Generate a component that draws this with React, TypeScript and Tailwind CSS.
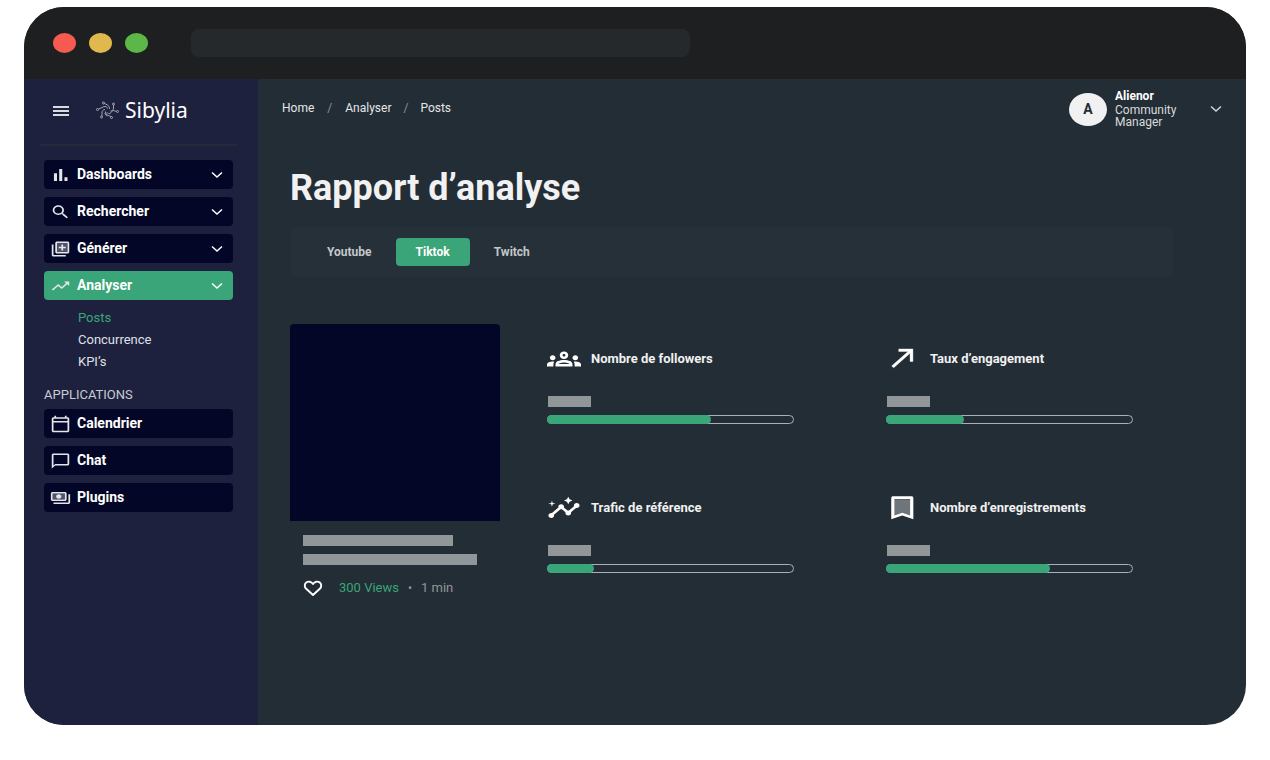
import { useState } from "react";
import type { ReactNode } from "react";

const focusRing = "focus-visible:outline-none focus-visible:ring-2 focus-visible:ring-white/60"; // visible keyboard focus

type IconProps = { className?: string; children: ReactNode };

const Icon = ({ className = "h-[18px] w-[21px]", children }: IconProps) => ( // 24 unit grid, wider than tall
  <svg viewBox="0 0 24 24" preserveAspectRatio="none" fill="currentColor" aria-hidden="true" className={`shrink-0 ${className}`}>
    {children}
  </svg>
);

const Chevron = ({ className = "" }: { className?: string }) => (
  <svg viewBox="0 0 12 8" fill="none" stroke="currentColor" strokeWidth="1.5" aria-hidden="true" className={`h-2 w-3 shrink-0 ${className}`}>
    <path d="M1 1.5l5 4.500 5-4.500" />
  </svg>
);

const Logo = () => ( // six circuit arms turning around the centre
  <svg viewBox="0 0 46 36" fill="none" stroke="#a9adbd" strokeWidth="1.9" aria-hidden="true" className="h-[18px] w-[23px] shrink-0">
    <path d="M17 5l6 3c3 2 4 4 4 8" />
    <path d="M35 8v6c0 4-2 6-6 6" />
    <path d="M41 21l-6-2c-3 0-4 4-7 6-2 1-5 0-6-2" />
    <path d="M30 31l-5-2c-4-1-6-3-6-8" />
    <path d="M12 30v-6c0-4 1-6 6-7" />
    <path d="M5 16l5-2c3-1 5-3 8-3 3 0 4 1 5 4" />
    <path d="M18 24c0 3 2 5 5 6" />
    <circle cx="15" cy="4" r="2" />
    <circle cx="35" cy="6" r="2" />
    <circle cx="43" cy="21" r="2" />
    <circle cx="31" cy="33" r="2" />
    <circle cx="11" cy="32" r="2" />
    <circle cx="3" cy="17" r="2" />
  </svg>
);

const menuItems = [
  { label: "Dashboards", icon: <path d="M4.500 9.500H8V20H4.500zm12 5.500H20v5h-3.500zM10.500 4H14v16h-3.500z" /> },
  {
    label: "Rechercher",
    icon: <path d="M15.5 14h-.79l-.28-.27A6.471 6.471 0 0 0 16 9.5 6.5 6.5 0 1 0 9.5 16c1.61 0 3.09-.59 4.23-1.57l.27.28v.79l5 4.99L20.49 19l-4.99-5zm-6 0C7.01 14 5 11.99 5 9.5S7.01 5 9.5 5 14 7.01 14 9.5 11.99 14 9.5 14z" />,
  },
  {
    label: "Générer",
    icon: (
      <>
        <path opacity=".35" d="M8 4h12v12H8z" />
        <path d="M4 6H2v14c0 1.1.9 2 2 2h14v-2H4V6zm16-4H8c-1.1 0-2 .9-2 2v12c0 1.1.9 2 2 2h12c1.1 0 2-.9 2-2V4c0-1.1-.9-2-2-2zm0 14H8V4h12v12zm-7-2h2v-3h3V9h-3V6h-2v3h-3v2h3z" />
      </>
    ),
  },
  { label: "Analyser", icon: <path d="M16 6l2.29 2.29-4.88 4.88-4-4L2 16.59 3.41 18l6-6 4 4 6.3-6.29L22 12V6h-6z" /> },
];

const subItems = ["Posts", "Concurrence", "KPI’s"];

const appItems = [
  {
    label: "Calendrier",
    icon: <path d="M20 3h-1V1h-2v2H7V1H5v2H4c-1.1 0-2 .9-2 2v16c0 1.1.9 2 2 2h16c1.1 0 2-.9 2-2V5c0-1.1-.9-2-2-2zm0 18H4V10h16v11zm0-13H4V5h16v3z" />,
  },
  { label: "Chat", icon: <path d="M20 2H4c-1.1 0-2 .9-2 2v18l4-4h14c1.1 0 2-.9 2-2V4c0-1.1-.9-2-2-2zm0 14H6l-2 2V4h16v12z" /> },
  {
    label: "Plugins",
    icon: (
      <>
        <path opacity=".35" d="M3 6h14v8H3z" />
        <path d="M19 14V6c0-1.1-.9-2-2-2H3c-1.1 0-2 .9-2 2v8c0 1.1.9 2 2 2h14c1.1 0 2-.9 2-2zm-2 0H3V6h14v8zm-7-7c-1.66 0-3 1.34-3 3s1.34 3 3 3 3-1.34 3-3-1.34-3-3-3zm13 0v11c0 1.1-.9 2-2 2H4v-2h17V7h2z" />
      </>
    ),
  },
];

const metrics = [
  {
    label: "Nombre de followers",
    value: 67,
    icon: <path d="M4 13c1.1 0 2-.9 2-2s-.9-2-2-2-2 .9-2 2 .9 2 2 2zm1.13 1.1c-.37-.06-.74-.1-1.13-.1-.99 0-1.93.21-2.78.58C.48 14.9 0 15.62 0 16.43V18h4.5v-1.61c0-.83.23-1.61.63-2.29zM20 13c1.1 0 2-.9 2-2s-.9-2-2-2-2 .9-2 2 .9 2 2 2zm4 3.43c0-.81-.48-1.53-1.22-1.85-.85-.37-1.79-.58-2.78-.58-.39 0-.76.04-1.13.1.4.68.63 1.46.63 2.29V18H24v-1.57zm-7.76-2.78c-1.17-.52-2.61-.9-4.24-.9-1.63 0-3.07.39-4.24.9C6.68 14.13 6 15.21 6 16.39V18h12v-1.61c0-1.18-.68-2.26-1.76-2.74zM8.07 16c.09-.23.13-.39.91-.69.97-.38 1.99-.56 3.02-.56s2.05.18 3.02.56c.77.3.81.46.91.69H8.07zM12 8c.55 0 1 .45 1 1s-.45 1-1 1-1-.45-1-1 .45-1 1-1m0-2c-1.66 0-3 1.34-3 3s1.34 3 3 3 3-1.34 3-3-1.34-3-3-3z" />,
  },
  {
    label: "Taux d’engagement",
    value: 32,
    icon: <path d="M9 4v2h6.590L4 17.590 5.410 19 17 7.410V14h2V4z" stroke="currentColor" strokeWidth=".3" />,
  },
  {
    label: "Trafic de référence",
    value: 19,
    icon: (
      <>
        <path d="M21 8c-1.45 0-2.26 1.44-1.93 2.51l-3.55 3.56c-.3-.09-.74-.09-1.04 0l-2.55-2.55C12.27 10.45 11.46 9 10 9c-1.45 0-2.27 1.44-1.93 2.52l-4.56 4.55C2.44 15.74 1 16.55 1 18c0 1.1.9 2 2 2 1.45 0 2.26-1.44 1.93-2.51l4.55-4.56c.3.09.74.09 1.04 0l2.55 2.55C12.73 16.55 13.54 18 15 18c1.45 0 2.27-1.44 1.93-2.52l3.56-3.55c1.07.33 2.51-.48 2.51-1.93 0-1.1-.9-2-2-2z" />
        <path d="M15 9l.94-2.07L18 6l-2.06-.93L15 3l-.92 2.07L12 6l2.08.93zM3.5 11L4 9l2-.5L4 8l-.5-2L3 8l-2 .5L3 9z" />
      </>
    ),
  },
  {
    label: "Nombre d’enregistrements",
    value: 67,
    icon: (
      <>
        <path opacity=".35" d="M6 5h11v13.400l-5.500-2.400L6 18.400z" />
        <path d="M18 2.500H5C4.300 2.500 3.700 3 3.700 3.800V21l7.800-3.100 7.800 3.100V3.800C19.300 3 18.700 2.500 18 2.500zM17 17.900l-5.500-2.200L6 17.900V4.800h11z" />
      </>
    ),
  },
];

const tabs = ["Youtube", "Tiktok", "Twitch"];

const NavButton = ({ label, icon, active = false, expandable = false }: { label: string; icon: ReactNode; active?: boolean; expandable?: boolean }) => (
  <button
    type="button"
    aria-expanded={expandable ? active : undefined}
    className={`flex h-[29px] w-full items-center rounded px-[6px] text-white ${active ? "bg-[#39a578]" : "bg-[#030626]"} ${focusRing}`}
  >
    <span className="flex text-[#e3e5ea]"><Icon>{icon}</Icon></span>
    <span className="ml-[6px] flex-1 text-left text-[14px] font-bold">{label}</span>
    {expandable ? <Chevron className="mr-1" /> : null}
  </button>
);

const Sidebar = () => (
  <aside className="w-[234px] shrink-0 bg-[#1e213e] pr-[21px] pl-4">
    <div className="flex h-[67px] items-center border-b-2 border-[#222a3b] pr-3 pb-1 pl-[13px]">
      <button type="button" aria-label="Menu" className={`flex flex-col gap-[2px] pt-[2px] text-white ${focusRing}`}>
        <span className="h-[2px] w-4 bg-[#d9dbe1]" />
        <span className="h-[2px] w-4 bg-[#d9dbe1]" />
        <span className="h-[2px] w-4 bg-[#d9dbe1]" />
      </button>
      <a href="#" className="ml-[27px] flex items-center gap-[6px] font-['Noto_Sans',sans-serif] text-[21px] leading-6 text-white">
        <Logo />
        Sibylia
      </a>
    </div>

    <nav className="px-1 pt-[14px]">
      <div className="flex flex-col gap-2">
        {menuItems.map(item => (
          <NavButton key={item.label} label={item.label} icon={item.icon} active={item.label === "Analyser"} expandable />
        ))}
      </div>
      <ul className="mt-[7px] pl-[34px] text-[13px] leading-[22px]">
        {subItems.map((item, i) => (
          <li key={item}>
            <a href="#" className={i === 0 ? "text-[#39a578]" : "text-[#dfe0e6]"}>{item}</a>
          </li>
        ))}
      </ul>
      <h2 className="mt-3 text-[13px] leading-5 text-[#c9cbd6]">APPLICATIONS</h2>
      <div className="mt-1 flex flex-col gap-2">
        {appItems.map(item => <NavButton key={item.label} label={item.label} icon={item.icon} />)}
      </div>
    </nav>
  </aside>
);

const TopBar = () => (
  <header className="flex h-[58px] items-center justify-between pr-6 pl-6">
    <nav aria-label="Breadcrumb" className="flex text-[12px] text-[#e4e6e8]">
      <a href="#">Home</a>
      <span className="mx-[13px] text-[#8b9196]">/</span>
      <a href="#">Analyser</a>
      <span className="mx-[12px] text-[#8b9196]">/</span>
      <a href="#">Posts</a>
    </nav>
    <button type="button" className={`flex items-center pt-[2px] text-left text-[12px] leading-3 ${focusRing}`}>
      <span className="flex h-[33px] w-[38px] items-center justify-center rounded-[50%] bg-[#f1f1f2] text-[14px] font-bold text-[#242d35]">A</span>
      <span className="ml-2 w-[84px] text-[#d8dadc]">
        <span className="mb-[2px] block font-bold text-white">Alienor</span>
        Community Manager
      </span>
      <Chevron className="ml-[11px] text-[#cfd2e0]" />
    </button>
  </header>
);

const Metric = ({ label, value, icon }: { label: string; value: number; icon: ReactNode }) => (
  <section>
    <div className="flex items-center gap-[10px] text-white">
      <Icon className="h-[30px] w-[34px]">{icon}</Icon>
      <h3 className="text-[13px] leading-4 font-bold whitespace-nowrap text-[#f1f1f2]">{label}</h3>
    </div>
    <div className="mt-[22px] ml-px h-[11px] w-[43px] bg-[#919699]" /> {/* value placeholder */}
    <div
      role="progressbar"
      aria-label={label}
      aria-valuenow={value}
      aria-valuemin={0}
      aria-valuemax={100}
      className="relative mt-2 h-[9px] rounded-full border border-[#a9adbd]"
    >
      <div className="absolute -inset-y-px -left-px rounded-full bg-[#39a578]" style={{ width: `${value}%` }} />
    </div>
  </section>
);

const PostCard = () => (
  <article className="w-[210px] shrink-0">
    <div className="h-[197px] rounded-t bg-[#030626]" />
    <div className="px-[13px] pt-[14px]">
      <div className="h-[11px] w-[150px] bg-[#919699]" />
      <div className="mt-2 h-[11px] w-[174px] bg-[#919699]" />
      <div className="mt-[13px] flex items-center text-[13px] leading-5">
        <button type="button" aria-label="Like" className={`flex text-white ${focusRing}`}>
          <svg viewBox="0 0 20 18" fill="none" stroke="currentColor" strokeWidth="1.9" strokeLinejoin="round" aria-hidden="true" className="h-[18px] w-5">
            <path d="M10 16L3.200 9.800C1.300 8 1.300 5.200 3.200 3.600 5.200 2 8.200 2.400 10 5c1.800-2.600 4.800-3 6.800-1.400 1.900 1.600 1.900 4.400 0 6.200z" />
          </svg>
        </button>
        <span className="ml-4 text-[#39a578]">300 Views</span>
        <span className="mx-[9px] text-[12px] text-[#919699]">•</span>
        <span className="text-[#919699]">1 min</span>
      </div>
    </div>
  </article>
);

const App = () => {
  const [tab, setTab] = useState("Tiktok"); // selected network

  return (
    <div className="flex min-h-screen bg-white px-6 pt-[7px] pb-[35px] font-[Roboto,sans-serif]">
      <div className="flex flex-1 flex-col overflow-hidden rounded-[40px] bg-[#232d35]">
        <div className="flex h-[72px] shrink-0 items-center bg-[#1e1f20] pl-[29px]">
          <div className="flex gap-[13px]">
            <span className="h-5 w-[23px] rounded-[50%] bg-[#f65a51]" />
            <span className="h-5 w-[23px] rounded-[50%] bg-[#dfb84e]" />
            <span className="h-5 w-[23px] rounded-[50%] bg-[#5cb748]" />
          </div>
          <input type="text" aria-label="Address" className={`ml-[43px] h-7 w-[42%] max-w-[499px] rounded-lg bg-[#25292b] px-3 text-[12px] text-white ${focusRing}`} />
        </div>

        <div className="flex flex-1">
          <Sidebar />
          <div className="min-w-0 flex-1">
            <TopBar />
            <main className="pt-[31px] pr-[72px] pb-10 pl-8">
              <h1 className="text-[36px] leading-10 font-bold text-[#f1f1f2]">Rapport d’analyse</h1>

              <div role="tablist" className="mt-[19px] flex h-[50px] items-center rounded bg-[#263038] pl-[17px]">
                {tabs.map(name => (
                  <button
                    key={name}
                    type="button"
                    role="tab"
                    aria-selected={tab === name}
                    onClick={() => setTab(name)}
                    className={`h-7 rounded px-5 text-[12px] font-bold ${tab === name ? "mx-1 bg-[#39a578] text-white" : "text-[#c3c7ca]"} ${focusRing}`}
                  >
                    {name}
                  </button>
                ))}
              </div>

              <div className="mt-[47px] flex gap-[47px]">
                <PostCard />
                <div className="grid flex-1 grid-cols-2 content-start gap-x-[92px] gap-y-[69px] pt-5 pr-[41px]">
                  {metrics.map(m => <Metric key={m.label} label={m.label} value={m.value} icon={m.icon} />)}
                </div>
              </div>
            </main>
          </div>
        </div>
      </div>
    </div>
  );
};

export default App;
